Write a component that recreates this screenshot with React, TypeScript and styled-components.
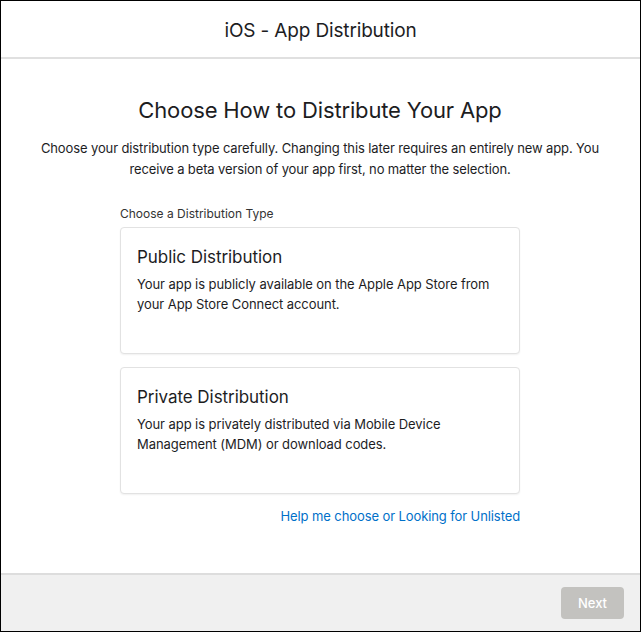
import React from "react";
import styled, { createGlobalStyle } from "styled-components";

const Global = createGlobalStyle`
  html, body { margin: 0; padding: 0; background: #fff; }
  body { font-family: Inter, "Noto Sans", "Liberation Sans", sans-serif; -webkit-font-smoothing: antialiased; }
  * { box-sizing: border-box; }
`;

const Frame = styled.div`
  width: 641px;
  height: 632px;
  border: 1px solid #000;
  display: flex;
  flex-direction: column;
  background: #fff;
  color: #1d1d1f;
`;

const Header = styled.header`
  height: 58px;
  flex: none;
  display: flex;
  align-items: center;
  justify-content: center;
  border-bottom: 2px solid #e0e0e0;
  font-size: 19px;
  letter-spacing: -0.15px;
  padding-top: 2px;
  color: #1d1d1f;
`;

const Main = styled.main`
  flex: 1;
  display: flex;
  flex-direction: column;
  align-items: center;
  padding-top: 37px;
  padding-right: 1px;
`;

const Heading = styled.h1`
  margin: 0;
  font-size: 22px;
  line-height: 28px;
  font-weight: 400;
  letter-spacing: -0.15px;
  color: #1d1d1f;
`;

const Description = styled.p`
  margin: 14px 0 0;
  width: 580px;
  text-align: center;
  font-size: 13px;
  line-height: 21px;
  letter-spacing: -0.12px;
  color: #1d1d1f;
`;

const Column = styled.div`
  width: 400px;
  margin-top: 26px;
  display: flex;
  flex-direction: column;
`;

const Label = styled.div`
  font-size: 12px;
  line-height: 16px;
  color: #333;
  margin-bottom: 5px;
`;

const Card = styled.div`
  height: 127px;
  border: 1px solid #e2e2e2;
  border-radius: 4px;
  box-shadow: 0 1px 2px rgba(0, 0, 0, 0.06);
  padding: 19px 16px 0;
  margin-bottom: 13px;
  background: #fff;
`;

const CardTitle = styled.div`
  font-size: 17px;
  line-height: 21px;
  letter-spacing: -0.05px;
  color: #1d1d1f;
`;

const CardText = styled.div`
  margin-top: 6px;
  font-size: 13px;
  line-height: 20px;
  letter-spacing: -0.07px;
  color: #1d1d1f;
`;

const HelpLink = styled.a`
  align-self: flex-end;
  margin-top: 1px;
  font-size: 13px;
  line-height: 16px;
  letter-spacing: -0.1px;
  color: #0070c9;
  text-decoration: none;
`;

const Footer = styled.footer`
  height: 58px;
  flex: none;
  border-top: 2px solid #dddddd;
  background: #f0f0f0;
  display: flex;
  align-items: center;
  justify-content: flex-end;
  padding-right: 16px;
`;

const Button = styled.button`
  width: 63px;
  height: 32px;
  border: none;
  border-radius: 4px;
  background: #c3c2bf;
  color: #fff;
  font-family: inherit;
  font-size: 13px;
  font-weight: 500;
`;

const cards = [
  {
    title: "Public Distribution",
    text: "Your app is publicly available on the Apple App Store from your App Store Connect account.",
  },
  {
    title: "Private Distribution",
    text: "Your app is privately distributed via Mobile Device Management (MDM) or download codes.",
  },
];

export default function App() {
  return (
    <>
      <Global />
      <Frame>
        <Header>iOS - App Distribution</Header>
        <Main>
          <Heading>Choose How to Distribute Your App</Heading>
          <Description>
            Choose your distribution type carefully. Changing this later requires an entirely new app. You
            receive a beta version of your app first, no matter the selection.
          </Description>
          <Column>
            <Label>Choose a Distribution Type</Label>
            {cards.map((c) => (
              <Card key={c.title}>
                <CardTitle>{c.title}</CardTitle>
                <CardText>{c.text}</CardText>
              </Card>
            ))}
            <HelpLink href="#">Help me choose or Looking for Unlisted</HelpLink>
          </Column>
        </Main>
        <Footer>
          <Button disabled>Next</Button>
        </Footer>
      </Frame>
    </>
  );
}
